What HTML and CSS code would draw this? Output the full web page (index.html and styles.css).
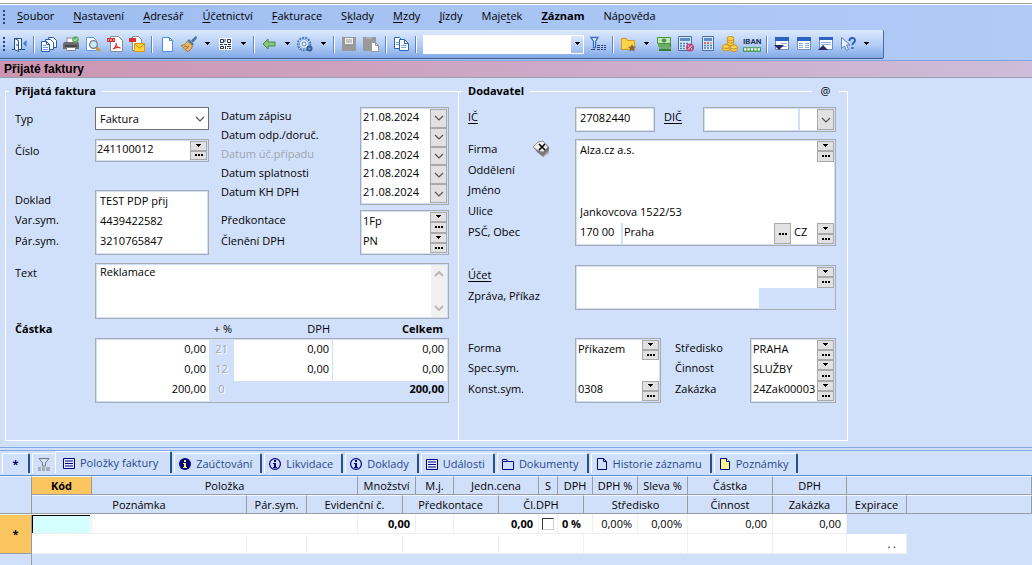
FILE: index.html
```html
<!DOCTYPE html>
<html lang="cs">
<head>
<meta charset="utf-8">
<title>Přijaté faktury</title>
<link rel="stylesheet" href="styles.css">
</head>
<body>
<svg class="defs" aria-hidden="true">
  <symbol id="tri" viewBox="0 0 7 4"><path d="M1 0h5v1H5v1H4v1H3V2H2V1H1z" fill="#000"/></symbol>
  <symbol id="dots" viewBox="0 0 8 2"><path d="M0 0h2v2H0zM3 0h2v2H3zM6 0h2v2H6z" fill="#000"/></symbol>
  <symbol id="chev" viewBox="0 0 10 6"><path d="M1 1l4 4 4-4" fill="none" stroke="#555" stroke-width="1.2"/></symbol>
  <symbol id="info" viewBox="0 0 14 14"><circle cx="7" cy="7" r="5.4" fill="none" stroke="#000080" stroke-width="1.2"/><path d="M6 3h2v2H6zM5 6h3v4h1v1H5v-1h1V7H5z" fill="#000080"/></symbol>
  <symbol id="list" viewBox="0 0 14 14"><path d="M1.500 2.500h11v10h-11z" fill="#fff" fill-opacity=".4" stroke="#000080"/><path d="M3 5h8M3 7.500h8M3 10h8" stroke="#000080"/></symbol>
</svg>

<nav class="menubar">
  <span class="grip"></span>
  <button><u>S</u>oubor</button><button><u>N</u>astavení</button><button><u>A</u>dresář</button><button><u>Ú</u>četnictví</button><button><u>F</u>akturace</button><button>S<u>k</u>lady</button><button><u>M</u>zdy</button><button><u>J</u>ízdy</button><button>Maje<u>t</u>ek</button><button class="strong"><u>Z</u>áznam</button><button>Náp<u>o</u>věda</button>
</nav>

<div class="toolstrip">
<div class="toolbar" role="toolbar">
  <span class="grip"></span>
  <button class="tool" aria-label="Zavřít"><svg viewBox="0 0 16 16"><path d="M1 13.500h13M3.500 13V2.500h7V13" fill="#fff" stroke="#244f92"/><path d="M3.500 2.500l4 2v11l-4-2z" fill="#eef4ff" stroke="#244f92"/><path d="M6 8v2" stroke="#244f92"/><path d="M15.500 4v7L12 7.500z" fill="#3b78d8"/></svg></button>
  <span class="sep"></span>
  <button class="tool" aria-label="Záznamy"><svg viewBox="0 0 16 16"><g fill="#fff" stroke="#2a5db5"><path d="M7.500 1.500h5l3 3v7h-8z"/><path d="M4.500 3.500h5l3 3v7h-8z"/><path d="M.5 5.500h5l3 3v7h-8z"/></g><path d="M2 9.500h3M2 11.500h5M2 13.500h5" stroke="#6f9de0"/><path d="M5.500 5.500v3h3" fill="none" stroke="#2a5db5"/></svg></button>
  <button class="tool" aria-label="Tisk"><svg viewBox="0 0 16 16"><path d="M4 2h8v6H4z" fill="#fff" stroke="#888"/><path d="M1 6h14l1 2v5H0V8z" fill="#6c6c70"/><path d="M2 9h12v2H2z" fill="#48484c"/><path d="M3.500 11.500h9v3h-9z" fill="#fff" stroke="#888"/><circle cx="12.500" cy="3.500" r="3.300" fill="#5fae58"/><path d="M11 3.500l1 1.200 2-2.300" fill="none" stroke="#fff"/></svg></button>
  <button class="tool" aria-label="Náhled"><svg viewBox="0 0 16 16"><path d="M1.500 1.500h7l3 3v10h-10z" fill="#fff" stroke="#5b9ae6"/><path d="M11 11l4 4" stroke="#d99a2b" stroke-width="2.500"/><circle cx="8.500" cy="8.500" r="3.800" fill="#cfe8f8" stroke="#6e7f91" stroke-width="1.300"/></svg></button>
  <button class="tool" aria-label="PDF"><svg viewBox="0 0 16 16"><path d="M3.500.5h8l4 4v11h-12z" fill="#fff" stroke="#8a8a8a"/><path d="M0 2h8v4H0z" fill="#d33131"/><path d="M1 4h1m1 0h2m1 0h1" stroke="#fff"/><path d="M6 13c3-2 3.500-4 3-6 0 3 2 5 4.500 5-2-1-5-.5-7.500 1" fill="none" stroke="#d33131" stroke-width="1.200"/></svg></button>
  <button class="tool" aria-label="E-mail"><svg viewBox="0 0 16 16"><path d="M3.500.5h6l3 3v11h-9z" fill="#fff" stroke="#8a8a8a"/><path d="M0 2h7v4H0z" fill="#d33131"/><path d="M5.500 7.500h10v8h-10z" fill="#ffd43c" stroke="#d59a1c"/><path d="M5.500 8l5 4 5-4" fill="none" stroke="#c78316"/></svg></button>
  <span class="sep"></span>
  <button class="tool" aria-label="Nový"><svg viewBox="0 0 16 16"><path d="M3.500 1.500h7l3 3v11h-10z" fill="#fff" stroke="#4a8fdf"/><path d="M10.500 1.500v3h3" fill="none" stroke="#4a8fdf"/></svg></button>
  <button class="tool" aria-label="Vyčistit"><svg viewBox="0 0 16 16"><path d="M15 .5l1 1L12 6l-1.500-1.500z" fill="#4d74aa" stroke="#4d74aa"/><path d="M8 3l5 5-2 1.500L6.500 5z" fill="#4d74aa"/><path d="M6.500 5l5 4.500C11 12.500 9 15 6 15.500 4 13 2 11 0 9.500 3 9.500 5 7.500 6.500 5z" fill="#e3b567" stroke="#a47b38"/><path d="M3 10l4 1M5 13l3-3" stroke="#a47b38"/></svg></button>
  <button class="drop" aria-label="Další"><svg><use href="#tri"/></svg></button>
  <button class="tool" aria-label="QR kód"><svg viewBox="0 0 16 16"><path d="M2 2h13v12H2z" fill="#fff"/><path d="M3.500 3.500h3v3h-3zM10.500 3.500h3v3h-3v-3zM3.500 10.500h3v2h-3z" fill="none" stroke="#27335f"/><path d="M8 3v3M3 8.500h3m1 0h3m1 0h3M8.500 10v3M10 10.500h4M10 12.500h1m1 0h2" stroke="#27335f"/></svg></button>
  <button class="drop" aria-label="Další"><svg><use href="#tri"/></svg></button>
  <span class="sep"></span>
  <button class="tool" aria-label="Zpět"><svg viewBox="0 0 16 16"><path d="M2 8l5-5v3h7v4H7v3z" fill="#8bc47b" stroke="#438b44"/></svg></button>
  <button class="drop" aria-label="Další"><svg><use href="#tri"/></svg></button>
  <button class="tool" aria-label="Nastavení"><svg viewBox="0 0 16 16"><circle cx="7" cy="8" r="6.300" fill="#cfe0f5" stroke="#4777bb" stroke-width="2" stroke-dasharray="2 1"/><circle cx="7" cy="8" r="4.500" fill="#e3effc" stroke="#7ba1d3"/><circle cx="7" cy="8" r="2" fill="#fff" stroke="#547fbd"/><circle cx="12.500" cy="12.500" r="3" fill="#315f9f"/><circle cx="12.500" cy="12.500" r="1" fill="#8bb0df"/></svg></button>
  <button class="drop" aria-label="Další"><svg><use href="#tri"/></svg></button>
  <span class="sep"></span>
  <button class="tool" aria-label="Uložit"><svg viewBox="0 0 16 16"><path d="M1 1h14v14H1z" fill="#999"/><path d="M4 2h8v6H4z" fill="#f1f1f1"/><path d="M5 4h6M5 6h6" stroke="#999"/></svg></button>
  <button class="tool" aria-label="Vložit"><svg viewBox="0 0 16 16"><path d="M0 1h13v14H0z" fill="#999"/><path d="M3 2h6" stroke="#ccc"/><path d="M8.500 6.500h4l3 3v6h-7z" fill="#fff" stroke="#999"/><path d="M12.500 6.500v3h3" fill="none" stroke="#999"/></svg></button>
  <span class="sep"></span>
  <button class="tool" aria-label="Kopírovat"><svg viewBox="0 0 16 16"><g fill="#fff" stroke="#2864bd"><path d="M1.500 1.500h5l3 3v8h-8z"/><path d="M6.500 3.500h5l4 4v7h-9z"/></g><path d="M3 6.500h3M3 8.500h3M8 9.500h5M8 11.500h5" stroke="#7fa9e4"/><path d="M11.500 3.500v4h4" fill="none" stroke="#2864bd"/></svg></button>
  <span class="sep"></span>
  <span class="finder"><input type="text" aria-label="Hledat"><button aria-label="Rozbalit"><svg><use href="#tri"/></svg></button></span>
  <button class="tool" aria-label="Filtr"><svg viewBox="0 0 16 16"><path d="M1 1.500h7L5.500 5.500v6h-2v-6z" fill="#e8f3ff" stroke="#3b6ebd" stroke-width="1.300"/><path d="M1 13.500h4M7 9.500h3m1 0h2m1 0h2M7 11.500h3m1 0h2m1 0h2M7 13.500h3m1 0h2m1 0h2" stroke="#34417e"/></svg></button>
  <span class="sep"></span>
  <button class="tool" aria-label="Složka"><svg viewBox="0 0 16 16"><path d="M1.500 2.500h5l1 2h7v9h-13z" fill="#ffd347" stroke="#d39b23"/><path d="M12 8l1.200 2.500 2.800.3-2 2 .5 2.700-2.500-1.300-2.500 1.300.5-2.700-2-2 2.800-.3z" fill="#8a6539"/></svg></button>
  <button class="drop" aria-label="Další"><svg><use href="#tri"/></svg></button>
  <button class="tool" aria-label="Hotovost"><svg viewBox="0 0 16 16"><path d="M3 5h12v10H3z" fill="#387d3c"/><path d="M2 7h12v4H2z" fill="#67ae61"/><path d="M1.500 1.500h13v6h-13z" fill="#c3e4b7" stroke="#4b9449"/><ellipse cx="8" cy="4.500" rx="2.300" ry="2" fill="#4b9449"/><path d="M3 12h12" stroke="#bbdfa6"/></svg></button>
  <button class="tool" aria-label="Výpočet procent"><svg viewBox="0 0 16 16"><path d="M.5.5h13v14H.5z" fill="#dbe9fb" stroke="#466fa8"/><path d="M2 2h10v3H2z" fill="#5c8dcd"/><path d="M2 7.500h2m1 0h2m1 0h2M2 10h2m1 0h2M2 12.500h2m1 0h2" stroke="#4f78b0" stroke-width="1.500"/><circle cx="12" cy="11.500" r="4" fill="#b7487b"/><path d="M10 13.500l4-4M10 10h1M13 13h1" stroke="#fff"/></svg></button>
  <button class="tool" aria-label="Kalkulačka"><svg viewBox="0 0 16 16"><path d="M2.500.5h11v14h-11z" fill="#dbe9fb" stroke="#466fa8"/><path d="M4 2h8v3H4z" fill="#5c8dcd"/><path d="M4 7h2m1 0h2" stroke="#d34b4b" stroke-width="1.500"/><path d="M10 7h2" stroke="#e6a52e" stroke-width="1.500"/><path d="M4 9.500h2m1 0h2m1 0h2M4 12h2m1 0h2m1 0h2" stroke="#4f78b0" stroke-width="1.500"/></svg></button>
  <button class="tool" aria-label="Mince"><svg viewBox="0 0 16 16"><g fill="#ffd34a" stroke="#c8901c"><ellipse cx="4" cy="13" rx="3.500" ry="2"/><ellipse cx="4" cy="10.500" rx="3.500" ry="2"/><ellipse cx="8.500" cy="7.500" rx="3.500" ry="2"/><ellipse cx="8.500" cy="5" rx="3.500" ry="2"/><ellipse cx="8.500" cy="2.500" rx="3.500" ry="2"/><ellipse cx="12" cy="13.500" rx="3.500" ry="2"/><ellipse cx="12" cy="11" rx="3.500" ry="2"/></g></svg></button>
  <button class="tool iban"><span>IBAN</span><svg viewBox="0 0 16 5"><path d="M.5 .5h15v3h-15z" fill="#fff" stroke="#3b984c"/><path d="M3.500 1v3M6.500 1v3M9.500 1v3M12.500 1v3" stroke="#3b984c"/></svg></button>
  <span class="sep"></span>
  <button class="tool" aria-label="Následující"><svg viewBox="0 0 16 16"><path d="M1.500 1.500h13v12h-13z" fill="#fff" stroke="#6a8fc8"/><path d="M1 1h14v4H1z" fill="#2d62c2"/><path d="M7 7.500h6M7 10.500h6" stroke="#8cb0e2"/><path d="M0 9h10l-5 5z" fill="#2b2868"/></svg></button>
  <button class="tool" aria-label="Formulář"><svg viewBox="0 0 16 16"><path d="M1.500 1.500h13v12h-13z" fill="#fff" stroke="#6a8fc8"/><path d="M1 1h14v4H1z" fill="#2d62c2"/><path d="M3 7.500h4m2 0h4M3 9.500h4m2 0h4M3 11.500h4m2 0h4" stroke="#8cb0e2"/></svg></button>
  <button class="tool" aria-label="Předchozí"><svg viewBox="0 0 16 16"><path d="M1.500 1.500h13v12h-13z" fill="#fff" stroke="#6a8fc8"/><path d="M1 1h14v3H1z" fill="#2d62c2"/><path d="M3 6.500h10M3 8.500h10" stroke="#8cb0e2"/><path d="M0 14h10L5 9z" fill="#2b2868"/></svg></button>
  <button class="tool" aria-label="Nápověda"><svg viewBox="0 0 16 16"><path d="M1.500 1.500v11l3-2.500 2 4.500 2-1-2-4.500h3.500z" fill="#e9f3ff" stroke="#6283b8"/><path d="M9.500 5c0-4 5.500-4 5.500-.5 0 2-2.500 2-2.500 4.500M12.500 11v2" fill="none" stroke="#2d62c2" stroke-width="2"/></svg></button>
  <button class="drop" aria-label="Další"><svg><use href="#tri"/></svg></button>
</div>
</div>

<h1 class="title">Přijaté faktury</h1>

<main class="workspace">
<form class="form">
  <fieldset class="panel">
    <legend>Přijatá faktura</legend>
    <div class="split">
      <div class="stack">
        <div class="pair"><label for="typ">Typ</label>
          <span class="combo"><select id="typ"><option>Faktura</option></select><svg class="chev"><use href="#chev"/></svg></span></div>
        <div class="pair"><label for="cislo">Číslo</label>
          <div class="box"><div class="line short"><input id="cislo" value="241100012"><span class="spin"><button type="button" aria-label="Rozbalit"><svg class="tri"><use href="#tri"/></svg></button><button type="button" aria-label="Vybrat"><svg class="dots"><use href="#dots"/></svg></button></span></div></div></div>
        <div class="pair end"><div class="labels"><label for="dok">Doklad</label><label for="vs">Var.sym.</label><label for="ps">Pár.sym.</label></div>
          <div class="box three"><input id="dok" value="TEST PDP přij"><input id="vs" value="4439422582"><input id="ps" value="3210765847"></div></div>
      </div>
      <div class="stack dates">
        <div class="pair"><div class="labels"><label for="d1">Datum zápisu</label><label for="d2">Datum odp./doruč.</label><label for="d3" class="off">Datum úč.případu</label><label for="d4">Datum splatnosti</label><label for="d5">Datum KH DPH</label></div>
          <div class="box five">
            <div class="line"><input id="d1" value="21.08.2024"><button type="button" class="pick" aria-label="Kalendář"><svg class="chev"><use href="#chev"/></svg></button></div>
            <div class="line"><input id="d2" value="21.08.2024"><button type="button" class="pick" aria-label="Kalendář"><svg class="chev"><use href="#chev"/></svg></button></div>
            <div class="line"><input id="d3" value="21.08.2024"><button type="button" class="pick" aria-label="Kalendář"><svg class="chev"><use href="#chev"/></svg></button></div>
            <div class="line"><input id="d4" value="21.08.2024"><button type="button" class="pick" aria-label="Kalendář"><svg class="chev"><use href="#chev"/></svg></button></div>
            <div class="line"><input id="d5" value="21.08.2024"><button type="button" class="pick" aria-label="Kalendář"><svg class="chev"><use href="#chev"/></svg></button></div>
          </div></div>
        <div class="pair end"><div class="labels"><label for="pk">Předkontace</label><label for="cd">Členění DPH</label></div>
          <div class="box two">
            <div class="line"><input id="pk" value="1Fp"><span class="spin"><button type="button" aria-label="Rozbalit"><svg class="tri"><use href="#tri"/></svg></button><button type="button" aria-label="Vybrat"><svg class="dots"><use href="#dots"/></svg></button></span></div>
            <div class="line"><input id="cd" value="PN"><span class="spin"><button type="button" aria-label="Rozbalit"><svg class="tri"><use href="#tri"/></svg></button><button type="button" aria-label="Vybrat"><svg class="dots"><use href="#dots"/></svg></button></span></div>
          </div></div>
      </div>
    </div>
    <div class="pair note"><label for="txt">Text</label>
      <div class="box memo"><textarea id="txt">Reklamace</textarea><span class="scroll"><svg viewBox="0 0 10 6"><path d="M1 5l4-4 4 4" fill="none" stroke="#b9b9b9" stroke-width="2"/></svg><svg viewBox="0 0 10 6"><path d="M1 1l4 4 4-4" fill="none" stroke="#b9b9b9" stroke-width="2"/></svg></span></div></div>
    <div class="amounts">
      <div class="sumhead"><b>Částka</b><span>+ %</span><span>DPH</span><b>Celkem</b></div>
      <div class="box three sums">
        <div class="sum"><input aria-label="Základ 21" value="0,00"><span>21</span><input aria-label="DPH 21" value="0,00"><input aria-label="Celkem 21" value="0,00"></div>
        <div class="sum"><input aria-label="Základ 12" value="0,00"><span>12</span><input aria-label="DPH 12" value="0,00"><input aria-label="Celkem 12" value="0,00"></div>
        <div class="sum"><input aria-label="Základ 0" value="200,00"><span>0</span><output class="total">200,00</output></div>
      </div>
    </div>
  </fieldset>

  <fieldset class="panel supplier">
    <legend>Dodavatel</legend>
    <button type="button" class="at">@</button>
    <div class="ids"><label for="ic"><u>IČ</u></label><div class="box tall"><input id="ic" value="27082440"></div><label for="dic"><u>DIČ</u></label>
      <div class="box tall"><div class="line cut"><input id="dic"><input aria-label="Kód DIČ" class="tiny"><button type="button" class="pick" aria-label="Rozbalit"><svg class="chev"><use href="#chev"/></svg></button></div></div></div>
    <div class="pair firm"><div class="labels"><span class="firmlabel"><label for="fi">Firma</label><svg viewBox="0 0 16 18"><path d="M0 7l5-5 5-1 6 6v5l-6 5-6-5z" fill="#777"/><path d="M0 7l5-5 5-1 5 6-5 5-6-2z" fill="#eee" stroke="#999"/><path d="M4 12l6 4 6-6v3l-6 4z" fill="#aaa"/><path d="M6 4l6 6M12 4l-6 6" stroke="#000" stroke-width="1.600"/></svg></span><label for="od">Oddělení</label><label for="jm">Jméno</label><label for="ul">Ulice</label><label for="psc">PSČ, Obec</label></div>
      <div class="box address">
        <div class="line"><input id="fi" value="Alza.cz a.s."><span class="spin"><button type="button" aria-label="Rozbalit"><svg class="tri"><use href="#tri"/></svg></button><button type="button" aria-label="Vybrat"><svg class="dots"><use href="#dots"/></svg></button></span></div>
        <input id="od"><input id="jm"><input id="ul" value="Jankovcova 1522/53">
        <div class="line city"><input id="psc" class="zip" value="170 00"><input aria-label="Obec" value="Praha"><button type="button" class="pick" aria-label="Vybrat obec"><svg class="dots"><use href="#dots"/></svg></button><input aria-label="Země" class="land" value="CZ"><span class="spin"><button type="button" aria-label="Rozbalit"><svg class="tri"><use href="#tri"/></svg></button><button type="button" aria-label="Vybrat"><svg class="dots"><use href="#dots"/></svg></button></span></div>
      </div></div>
    <div class="pair account"><div class="labels"><label for="uc"><u>Účet</u></label><label for="zp">Zpráva, Příkaz</label></div>
      <div class="box two">
        <div class="line"><input id="uc"><span class="spin"><button type="button" aria-label="Rozbalit"><svg class="tri"><use href="#tri"/></svg></button><button type="button" aria-label="Vybrat"><svg class="dots"><use href="#dots"/></svg></button></span></div>
        <input id="zp" class="message">
      </div></div>
    <div class="pay">
      <div class="labels"><label for="fo">Forma</label><label for="ss">Spec.sym.</label><label for="ks">Konst.sym.</label></div>
      <div class="box three">
        <div class="line"><input id="fo" value="Příkazem"><span class="spin"><button type="button" aria-label="Rozbalit"><svg class="tri"><use href="#tri"/></svg></button><button type="button" aria-label="Vybrat"><svg class="dots"><use href="#dots"/></svg></button></span></div>
        <input id="ss">
        <div class="line"><input id="ks" value="0308"><span class="spin"><button type="button" aria-label="Rozbalit"><svg class="tri"><use href="#tri"/></svg></button><button type="button" aria-label="Vybrat"><svg class="dots"><use href="#dots"/></svg></button></span></div>
      </div>
      <div class="labels second"><label for="st">Středisko</label><label for="ci">Činnost</label><label for="za">Zakázka</label></div>
      <div class="box three">
        <div class="line"><input id="st" value="PRAHA"><span class="spin"><button type="button" aria-label="Rozbalit"><svg class="tri"><use href="#tri"/></svg></button><button type="button" aria-label="Vybrat"><svg class="dots"><use href="#dots"/></svg></button></span></div>
        <div class="line"><input id="ci" value="SLUŽBY"><span class="spin"><button type="button" aria-label="Rozbalit"><svg class="tri"><use href="#tri"/></svg></button><button type="button" aria-label="Vybrat"><svg class="dots"><use href="#dots"/></svg></button></span></div>
        <div class="line"><input id="za" value="24Zak00003"><span class="spin"><button type="button" aria-label="Rozbalit"><svg class="tri"><use href="#tri"/></svg></button><button type="button" aria-label="Vybrat"><svg class="dots"><use href="#dots"/></svg></button></span></div>
      </div>
    </div>
  </fieldset>
</form>
</main>

<section class="items">
  <div class="tabs" role="tablist">
    <button role="tab" class="star">*</button>
    <button role="tab" class="funnel" aria-label="Filtr"><svg viewBox="0 0 14 14"><path d="M2 1.500h10L8.500 6v3h-3V6z" fill="none" stroke="#777"/><path d="M1 11h3m1 0h3m1 0h4M1 13h3m1 0h3m1 0h4" stroke="#777"/></svg></button>
    <button role="tab" class="active" aria-selected="true"><svg><use href="#list"/></svg>Položky faktury</button>
    <button role="tab"><svg viewBox="0 0 14 14"><circle cx="7" cy="7" r="6" fill="#000080"/><path d="M6 3h2v2H6zM5 6h3v4h1v1H5v-1h1V7H5z" fill="#ffef5e"/></svg>Zaúčtování</button>
    <button role="tab"><svg><use href="#info"/></svg>Likvidace</button>
    <button role="tab"><svg><use href="#info"/></svg>Doklady</button>
    <button role="tab"><svg><use href="#list"/></svg>Události</button>
    <button role="tab"><svg viewBox="0 0 14 14"><path d="M1.500 12.500v-10h4l1 2h6v8z" fill="none" stroke="#000080"/><path d="M1.500 4.500h5" stroke="#000080"/></svg>Dokumenty</button>
    <button role="tab"><svg viewBox="0 0 14 14"><path d="M2.500 1.500h6l3 3v8h-9z" fill="none" stroke="#000080"/><path d="M8.500 1.500v3h3" fill="none" stroke="#000080"/></svg>Historie záznamu</button>
    <button role="tab"><svg viewBox="0 0 14 14"><path d="M2.500 1.500h6l3 3v8h-9z" fill="#fff58a" stroke="#000080"/><path d="M8.500 1.500v3h3" fill="#fff" stroke="#000080"/></svg>Poznámky</button>
  </div>
  <table class="grid">
    <colgroup><col class="w32"><col class="w60"><col class="w155"><col class="w60"><col class="w51"><col class="w45"><col class="w13"><col class="w38"><col class="w45"><col class="w40"><col class="w19"><col class="w26"><col class="w9"><col class="w45"><col class="w50"><col class="w85"><col class="w74"><col class="w60"><col></colgroup>
    <thead>
      <tr><th rowspan="2"></th><th class="hot">Kód</th><th colspan="3">Položka</th><th colspan="2">Množství</th><th>M.j.</th><th colspan="2">Jedn.cena</th><th>S</th><th colspan="2">DPH</th><th>DPH %</th><th>Sleva %</th><th>Částka</th><th>DPH</th><th colspan="2"></th></tr>
      <tr><th colspan="2">Poznámka</th><th>Pár.sym.</th><th colspan="2">Evidenční č.</th><th colspan="3">Předkontace</th><th colspan="3">Čl.DPH</th><th colspan="3">Středisko</th><th>Činnost</th><th>Zakázka</th><th>Expirace</th><th></th></tr>
    </thead>
    <tbody>
      <tr><th rowspan="2" class="hot">*</th><td class="edit"><input aria-label="Kód"></td><td colspan="3"></td><td colspan="2" class="b">0,00</td><td></td><td colspan="2" class="b">0,00</td><td class="check"><input type="checkbox" aria-label="S"></td><td colspan="2" class="b rate">0 %</td><td>0,00%</td><td>0,00%</td><td>0,00</td><td>0,00</td><td colspan="2" class="void"></td></tr>
      <tr><td colspan="2"></td><td></td><td colspan="2"></td><td colspan="3"></td><td colspan="3"></td><td colspan="3"></td><td></td><td></td><td class="exp">.&nbsp;.</td><td class="void"></td></tr>
      <tr><td class="void edge"></td><td colspan="18" class="void"></td></tr>
    </tbody>
  </table>
</section>
</body>
</html>
```

FILE: styles.css
```css
* { box-sizing: border-box; }
html, body { height: 100%; }
body { margin: 0; padding-top: 3px; display: flex; flex-direction: column; overflow: hidden; background: #fff; color: #000; font: 11px/14px "Open Sans", "Noto Sans", sans-serif; }
body > * { flex: none; }
button, input, select, textarea { font: inherit; color: inherit; margin: 0; padding: 0; border: 0; border-radius: 0; background: none; outline: 0; }
svg { display: block; }
.defs { position: absolute; width: 0; height: 0; }
u { text-underline-offset: 2px; }

.menubar { display: flex; align-items: center; height: 27px; border-top: 1px solid #a0a0a0; box-shadow: inset 0 1px #fff; background: linear-gradient(90deg, #9ebdf0, #b1cbf6); }
.menubar button { padding: 0 10px 2px 9px; }
.menubar .grip { margin-right: 3px; }
.strong { font-weight: 700; }
.grip { width: 2px; height: 15px; margin-left: 3px; background: repeating-linear-gradient(#27436f 0 2px, transparent 2px 4px); }

.toolstrip { padding-bottom: 1px; background: linear-gradient(90deg, #9ebdf0, #b1cbf6); border-bottom: 1px solid #7fa6e4; }
.toolbar { display: flex; align-items: center; width: fit-content; height: 29px; padding-right: 10px; background: linear-gradient(#dce9fd, #b5cff7 50%, #82a9e6); border-right: 1px solid #4a69a0; border-bottom: 1px solid #3f5c8d; border-radius: 0 2px 2px 0; }
.toolbar .grip { margin-right: 3px; }
.tool { flex: none; width: 22px; height: 22px; padding: 3px; }
.tool svg { width: 16px; height: 16px; }
.drop { flex: none; width: 14px; height: 22px; display: grid; place-items: center; }
.drop svg, .finder svg, svg.tri { width: 7px; height: 4px; }
.sep { flex: none; width: 2px; height: 17px; margin: 0 3px; background: linear-gradient(90deg, #5f85c0 50%, #fff 50%); }
.finder { display: flex; width: 161px; height: 19px; margin: 0 3px; border: 1px solid #fff; background: #fff; }
.finder input { flex: 1; min-width: 0; }
.finder button { width: 12px; background: linear-gradient(#dce9fd, #9bbcf0); display: grid; place-items: center; }
.tool.iban { padding: 1px 2px; font: 700 8px/11px Roboto, sans-serif; color: #24345f; }
.tool.iban svg { width: 18px; height: 6px; }

.title { margin: 0; height: 17px; padding-left: 4px; font: 700 12px/16px "Liberation Sans", sans-serif; background: linear-gradient(90deg, #cc94b0, #cdbcdb); border-bottom: 1px solid #999fae; }

.workspace { background: #d1e0fa; padding: 6px 5px; border-bottom: 1px solid #82a9e6; }
.form { display: grid; grid-template-columns: 454fr 389fr; width: 100%; max-width: 843px; }
.panel { position: relative; min-width: 0; min-height: 357px; margin: 0; padding: 9px 9px 0; border: 1px solid #fff; }
.panel legend { margin-left: -6px; padding: 0 6px; font-weight: 700; }
.supplier { border-left: 0; padding: 9px 11px 0 9px; }
.at { position: absolute; top: -14px; right: 8px; width: 27px; background: #d1e0fa; }
.split { display: grid; grid-template-columns: 194fr 228fr; gap: 12px; }
.stack { display: flex; flex-direction: column; gap: 9px; min-height: 148px; }
.dates { gap: 5px; }
.end { margin-top: auto; }
.pair { display: grid; grid-template-columns: 80px 1fr; }
.dates .pair { grid-template-columns: 139px 1fr; }
.pair > label { padding-top: 5px; }
.pair.note > label { padding-top: 3px; }
.labels { display: grid; grid-auto-rows: 1fr; align-items: center; padding-bottom: 4px; }
.off { color: #a0a5af; }
.box { display: grid; grid-auto-rows: 1fr; min-width: 0; border: 1px solid #a9abb3; padding: 1px; }
.box input, .box textarea { width: 100%; min-width: 0; min-height: 0; height: 100%; background: #fff; padding: 0 0 4px 3px; }
.box .short input { padding-left: 0; }
.dates .box input, .pay .box input { padding-left: 1px; }
.line { display: flex; min-width: 0; min-height: 0; background: #fff; }
.short { height: 19px; }
.combo { display: grid; align-items: center; border: 1px solid #707070; background: #fff; height: 23px; }
.combo > * { grid-area: 1 / 1; }
.combo select { appearance: none; width: 100%; padding-left: 4px; }
.combo svg { justify-self: end; margin-right: 3px; pointer-events: none; }
svg.chev { width: 10px; height: 6px; }
svg.dots { width: 8px; height: 2px; }
.spin { flex: none; width: 17px; display: grid; grid-template-rows: 1fr 1fr; }
.spin button, .pick { display: grid; place-items: center; border: 1px solid #a9a9a9; background: #e1e1e1; min-height: 0; }
.pick { flex: none; width: 17px; }
.two { height: 45px; }
.three { height: 65px; }
.five { height: 98px; }
.address { height: 107px; }
.tall { height: 25px; }
.note { margin-top: 8px; }
.memo { display: flex; height: 56px; }
.memo textarea { flex: 1; resize: none; overflow: hidden; }
.scroll { width: 16px; background: #f0f0f0; display: flex; flex-direction: column; justify-content: space-between; padding: 6px 3px; }
.scroll svg { width: 10px; height: 6px; }
.sumhead { display: grid; grid-template-columns: 192px 25px 98px 1fr; height: 19px; align-items: center; text-align: right; padding-right: 6px; }
.sumhead b:first-child { text-align: left; }
.sums { margin-left: 80px; }
.sum { display: grid; grid-template-columns: 112px 25px 98px 1fr; min-height: 0; }
.box .sum input { text-align: right; padding-right: 3px; }
.sum input:last-child { border-left: 1px solid #d1e0fa; }
.sum span { text-align: center; color: #a0a5af; align-self: center; padding-bottom: 3px; text-shadow: 1px 1px #fff; }
.total { grid-column: 3 / 5; text-align: right; padding: 0 3px 3px 0; font-weight: 700; align-self: center; }

.ids { display: grid; grid-template-columns: 107px 80px 48px 1fr; }
.ids label { padding-top: 3px; }
.ids label:nth-of-type(2) { padding-left: 9px; }
.cut { gap: 2px; background: #d1e0fa; }
.cut .pick { margin-left: -2px; }
.box input.tiny { flex: none; width: 17px; }
.firm, .account { grid-template-columns: 107px 1fr; }
.firm { margin-top: 7px; }
.firmlabel { display: flex; justify-content: space-between; align-items: center; }
.firmlabel svg { width: 16px; height: 18px; margin-right: 26px; }
.box input.zip { flex: none; width: 46px; border-right: 2px solid #d1e0fa; }
.box .city input:nth-of-type(2) { padding-left: 1px; }
.box input.land { flex: none; width: 26px; }
.account { margin-top: 19px; }
.box input.message { width: 71%; }
.pay { display: grid; grid-template-columns: 107px 86fr 89px 86fr; margin-top: 28px; }
.second { padding-left: 14px; }

.items { flex: 1; background: #d1e0fa; border-top: 2px solid #d1e0fa; }
.tabs { display: flex; align-items: flex-end; gap: 2px; height: 26px; border-top: 1px solid #82a9e6; border-bottom: 1px solid #5b8ed2; padding: 0 2px 2px; color: #27488c; }
.tabs button { display: flex; align-items: center; gap: 4px; height: 20px; padding: 0 8px 0 3px; border-top: 1px solid #fff; border-left: 1px solid #fff; border-right: 2px solid #27508f; border-radius: 2px 2px 0 0; white-space: nowrap; }
.tabs svg { width: 14px; height: 14px; }
.tabs .star { width: 28px; padding: 0; justify-content: center; font-weight: 700; color: #000080; }
.tabs .funnel { width: 23px; padding: 0 4px; border-right: 0; }
.tabs .active { height: 22px; padding: 0 12px 0 6px; margin-left: -2px; }

.grid { width: 100%; table-layout: fixed; border-collapse: separate; border-spacing: 0; }
.grid tr { height: 20px; }
.grid thead tr { height: 19px; }
.grid th, .grid td { padding: 0; line-height: 14px; white-space: nowrap; overflow: hidden; }
.grid th { font-weight: 400; background: #d1e0fa; border-right: 1px solid #9a9ca3; border-bottom: 1px solid #9a9ca3; border-top: 1px solid #f3f8ff; }
.grid th.hot { background: #fbc660; font-weight: 700; }
.grid td { background: #fff; border-right: 1px solid #efefef; border-bottom: 1px solid #efefef; text-align: right; padding-right: 5px; }
.grid td.b { font-weight: 700; }
.grid td.rate { padding-right: 11px; }
.grid td.void { background: #d1e0fa; border: 0; }
.grid td.edge { border-right: 1px solid #9a9ca3; }
.grid td.edit { padding: 0 1px 0 0; }
.edit input { display: block; width: 100%; height: 18px; background: #d5ffff; border-top: 1px solid #000; border-left: 1px solid #000; }
.grid td.check { padding: 0; }
.check input { appearance: none; display: block; width: 12px; height: 12px; margin: 0 auto; background: #fff; border: 1px solid; border-color: #333 #ccc #ccc #333; }
.grid td.exp { padding-right: 10px; }
.w9 { width: 9px; } .w13 { width: 13px; } .w19 { width: 19px; } .w26 { width: 26px; } .w32 { width: 32px; } .w38 { width: 38px; }
.w40 { width: 40px; } .w45 { width: 45px; } .w50 { width: 50px; } .w51 { width: 51px; } .w60 { width: 60px; }
.w74 { width: 74px; } .w85 { width: 85px; } .w155 { width: 155px; }
```
